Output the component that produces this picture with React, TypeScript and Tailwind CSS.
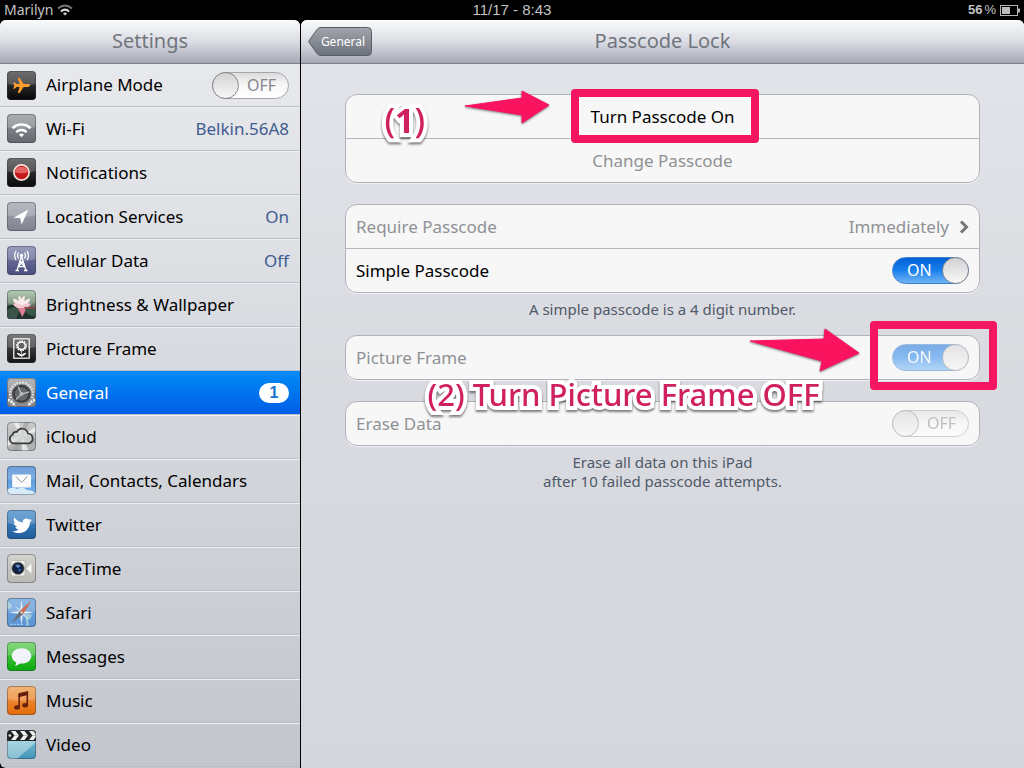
import React, { useId, useState } from "react";
import clsx from "clsx";

type IconProps = {
  from: string;
  to: string;
  gloss?: boolean;
  children: React.ReactNode;
};

const Tile: React.FC<IconProps> = ({ from, to, gloss = true, children }) => {
  const id = useId();

  return (
    <svg viewBox="0 0 29 29" className="h-[29px] w-[29px] shrink-0" aria-hidden="true">
      <defs>
        <linearGradient id={`${id}-bg`} x1="0" y1="0" x2="0" y2="1">
          <stop offset="0" stopColor={from} />
          <stop offset="1" stopColor={to} />
        </linearGradient>
        <clipPath id={`${id}-clip`}>
          <rect width="29" height="29" rx="4" />
        </clipPath>
      </defs>
      <g clipPath={`url(#${id}-clip)`}>
        <rect width="29" height="29" fill={`url(#${id}-bg)`} />
        {gloss && <path d="M0 0H29V13Q14.5 17 0 13Z" fill="#fff" opacity="0.2" />}
        {children}
      </g>
      <rect x="0.5" y="0.5" width="28" height="28" rx="3.5" fill="none" stroke="#30343c" strokeOpacity="0.4" />
    </svg>
  );
};

const AirplaneIcon = () => (
  <Tile from="#4a4a4c" to="#050505">
    <path
      d="M23 14.5C23 13.6 21.7 13.1 20.3 13.1H16.6L12.6 7H10.8L12.6 13.1H9.4L7.7 11.2H6.3L7.3 14.5L6.3 17.8H7.7L9.4 15.9H12.6L10.8 22H12.6L16.6 15.9H20.3C21.7 15.9 23 15.4 23 14.5Z"
      fill="#ff9d2c"
    />
  </Tile>
);

const WifiIcon = () => (
  <Tile from="#969aa0" to="#63686f">
    <g fill="none" stroke="#fff" strokeWidth="2.6">
      <path d="M5.5 14.3C10.6 9.3 18.4 9.3 23.5 14.3" />
      <path d="M9.3 18.1C12.2 15.3 16.8 15.3 19.7 18.1" />
    </g>
    <path d="M11.9 20.6Q14.5 18.6 17.1 20.6L14.5 23.2Z" fill="#fff" />
  </Tile>
);

const NotificationsIcon = () => (
  <Tile from="#4b4b4d" to="#080808">
    <circle cx="14.5" cy="14.5" r="7.6" fill="#c5161c" stroke="#f4dfd5" strokeWidth="1.7" />
    <path d="M8 14.3A6.6 6.6 0 0 1 21 14.3Q14.5 16 8 14.3Z" fill="#e46461" />
  </Tile>
);

const LocationIcon = () => (
  <Tile from="#a6a9b3" to="#7f838f">
    <path d="M21.5 7.5L6.5 15.7L13.2 16.1L14.6 22.5Z" fill="#fff" />
  </Tile>
);

const CellularIcon = () => (
  <Tile from="#8084aa" to="#494b7d">
    <g fill="none" stroke="#fff" strokeWidth="1.3">
      <path d="M14.5 10L10 24.5M14.5 10L19 24.5M12.8 15.5L17.8 20.5M16.2 15.5L11.2 20.5M12.4 16H16.6M11 20.7H18" />
      <path d="M11.5 6.5Q9.7 9.5 11.5 12.5M9 5Q6.3 9.5 9 14M17.5 6.5Q19.3 9.5 17.5 12.5M20 5Q22.7 9.5 20 14" />
    </g>
    <circle cx="14.5" cy="9.5" r="1.7" fill="#fff" />
    <path d="M8.5 24.5H12M17 24.5H20.5" stroke="#fff" strokeWidth="1.3" />
  </Tile>
);

const WallpaperIcon = () => (
  <Tile from="#a2bf9f" to="#26382f">
    <path d="M0 16Q8 13 14 17T29 16V29H0Z" fill="#20332d" />
    <path d="M0 20Q7 15 13 20L9 29H0ZM17 20Q24 15 29 19V26Q22 27 17 20Z" fill="#3c5549" />
    <path d="M14.5 16Q5.5 14 6 8.5Q10 9 12 11Q10.5 8 12 5.5Q14 7 14.5 9Q15 7 17.5 5.5Q18.5 8 17.2 11Q19.5 9 23 8.5Q23.5 14 14.5 16Z" fill="#faeaec" />
    <path d="M6 14Q11 12 15 16Q19 12 24 14Q22 18.5 15 18.5Q8 18.5 6 14Z" fill="#f3c8d0" />
    <path d="M10.5 18H19L17.5 23L15 27L13 22Z" fill="#e07f92" />
    <path d="M17 17L29 16.5V18.5L18 19Z" fill="#8c4a4c" />
  </Tile>
);

const PictureFrameIcon = () => (
  <Tile from="#59595b" to="#141416">
    <rect x="6.8" y="4.8" width="15.4" height="19.4" fill="none" stroke="#fff" strokeWidth="1.2" />
    <circle cx="14.5" cy="11.8" r="4.7" fill="none" stroke="#fff" strokeWidth="1.6" strokeDasharray="1.5 0.9" />
    <circle cx="14.5" cy="11.8" r="3.7" fill="none" stroke="#fff" strokeWidth="1.3" />
    <path d="M14.5 16.5V23M14.5 22Q11 21.5 10 19.2Q13.5 19.2 14.5 22Q15.5 19.2 19 19.2Q18 21.5 14.5 22" fill="#fff" stroke="#fff" strokeWidth="0.7" />
  </Tile>
);

const GeneralIcon = () => (
  <Tile from="#a0a2a6" to="#77797d">
    <circle cx="14.5" cy="16" r="11.2" fill="none" stroke="#ececec" strokeWidth="2.6" strokeDasharray="1.5 1.3" />
    <circle cx="14.5" cy="16" r="10" fill="#484a4d" stroke="#a9abad" strokeWidth="0.8" />
    <circle cx="14.5" cy="16" r="7.3" fill="#65676a" stroke="#303235" />
    <path d="M14.5 16L11 8.5M14.5 16L22 14M14.5 16L9 21.5" stroke="#b5b7b9" strokeWidth="1.4" />
    <circle cx="14.5" cy="16" r="1.9" fill="#b9babc" />
    <path d="M0 20Q5 20 8 23Q14.5 27 21 23Q24 20 29 20V29H0Z" fill="#8a8c8f" />
    <path d="M1 22Q5 23 8 28M28 22Q24 23 21 28" fill="none" stroke="#fff" strokeWidth="2.6" strokeDasharray="2 1" />
  </Tile>
);

const ICloudIcon = () => (
  <Tile from="#c9cacb" to="#acaeb0" gloss={false}>
    <path d="M14.5 14.5L6 0H12ZM14.5 14.5L29 4V10ZM14.5 14.5L22 29H15ZM14.5 14.5L0 25V19Z" fill="#f2f2f2" opacity="0.8" />
    <path d="M14.5 14.5L17 0H23ZM14.5 14.5L29 17V23ZM14.5 14.5L5 29H11Z" fill="#949698" opacity="0.5" />
    <path
      d="M6.6 21.4A4.5 4.5 0 0 1 5.6 12.8A3.8 3.8 0 0 1 9.8 10A5.9 5.9 0 0 1 20.9 11.5A5.1 5.1 0 0 1 22.2 21.4Z"
      fill="#dcdddd"
      fillOpacity="0.7"
      stroke="#3a3c3f"
      strokeWidth="1.7"
    />
  </Tile>
);

const MailIcon = () => (
  <Tile from="#4c86cf" to="#74b4ec">
    <path d="M0 24Q5 20 10 23Q16 20 20 24Q25 24 29 27V29H0Z" fill="#e2f2fa" opacity="0.9" />
    <rect x="5.2" y="8.5" width="18.8" height="13" rx="1" fill="#fbfbfb" />
    <path d="M9 10.5L13.6 15.6Q14.6 16.6 15.6 15.6L20.2 10.5" fill="none" stroke="#8c939c" />
    <path d="M6 21L11.8 14.6M23.2 21L17.4 14.6" stroke="#e0e3e6" strokeWidth="0.7" />
  </Tile>
);

const TwitterIcon = () => (
  <Tile from="#4c91cd" to="#1f5d9c">
    <path
      d="M24.8 10.1C24.1 10.4 23.6 10.5 23 10.6C23.7 10.2 24.1 9.6 24.3 8.8C23.7 9.2 22.8 9.5 22.1 9.6C19.5 7.1 15.3 8.8 15.8 12.4C12.6 12.3 9.6 10.7 7.3 7.6C6 9.8 7 12 8.5 13.1C8 13.1 7.3 12.9 6.8 12.6C6.9 14.7 8.2 16.2 10 16.8C9.4 17 8.7 17 8.3 16.9C8.8 18.4 10.1 19.4 11.8 19.5C10 20.9 7.6 21.4 5.2 21.2C12.8 25.9 22.9 21.6 22.9 12.3C23.7 11.7 24.3 11 24.8 10.1Z"
      fill="#fff"
    />
  </Tile>
);

const FaceTimeIcon = () => (
  <Tile from="#d4d3ce" to="#bab9b4" gloss={false}>
    <rect x="4" y="6.5" width="14" height="15.5" rx="2" fill="#f1f1ee" stroke="#a7a7a3" strokeWidth="0.6" />
    <path d="M19 14.4L24.9 8.5V20.5Z" fill="#fafaf7" stroke="#aaaaa5" strokeWidth="0.5" />
    <circle cx="11" cy="14.3" r="6.4" fill="#23262b" stroke="#aeb1b5" strokeWidth="0.8" />
    <circle cx="11" cy="14.3" r="4.4" fill="#0d2147" />
    <path d="M8.2 11.8Q11 9.2 13.6 12L11 14.3Z" fill="#5c86c4" />
    <circle cx="12.8" cy="16" r="1.6" fill="#2e5a9e" />
  </Tile>
);

const SafariIcon = () => (
  <Tile from="#6ea6df" to="#5c94d4">
    <path d="M17 17Q22 14 25 17Q24 21 21 22L22 27L19 28Q20 22 17 17ZM0 4Q4 4 5 8L3 11L0 10Z" fill="#c8e6d9" opacity="0.6" />
    <path d="M14.5 2L16 13L27 14.5L16 16L14.5 27L13 16L2 14.5L13 13Z" fill="#fff" opacity="0.8" />
    <path d="M7 7L14 12.8L22 22L15 16.2Z" fill="#e5f1fb" opacity="0.9" />
    <path d="M24.6 2.5L16.2 16.2L12.8 12.8Z" fill="#cf6d50" />
    <path d="M4.5 25L16.2 16.2L12.8 12.8Z" fill="#6b7079" />
    <circle cx="14.5" cy="14.5" r="1.1" fill="#e9eef5" />
    <path d="M3 26.3H16" stroke="#fff" strokeWidth="0.9" strokeDasharray="2 1.5" opacity="0.7" />
  </Tile>
);

const MessagesIcon = () => (
  <Tile from="#68cf5b" to="#08a90b">
    <path
      d="M14.5 6.2C9 6.2 4.8 9.6 4.8 13.9C4.8 16.7 6.6 19 9.2 20.4C9.2 21.8 8.6 22.9 7.7 23.8C9.9 23.6 11.6 22.7 12.8 21.5C19 22.2 24.3 18.8 24.3 13.9C24.3 9.6 20 6.2 14.5 6.2Z"
      fill="#f2f4fb"
    />
  </Tile>
);

const MusicIcon = () => (
  <Tile from="#f0a354" to="#e56a08">
    <path d="M12.2 8V21M20.3 6V18.6" stroke="#66200c" strokeWidth="1.6" />
    <path d="M11.4 7.2L21.1 4.9V8.9L11.4 11.2Z" fill="#66200c" />
    <ellipse cx="10.1" cy="21.4" rx="2.9" ry="2.2" fill="#66200c" />
    <ellipse cx="18.2" cy="19.3" rx="2.9" ry="2.2" fill="#66200c" />
  </Tile>
);

const VideoIcon = () => (
  <Tile from="#9ad2e2" to="#3e94b7" gloss={false}>
    <path d="M29 12L10 29H0V11H29Z" fill="#dff2f6" opacity="0.45" />
    <rect width="29" height="11" fill="#222426" />
    <path d="M4 1H8.5L12 5.5H7.5ZM13 1H17.5L21 5.5H16.5ZM22 1H26.5L30 5.5H25.5Z" fill="#f2f2f0" />
    <path d="M7.5 5.5H12L8.5 10H4ZM16.5 5.5H21L17.5 10H13ZM25.5 5.5H30L26.5 10H22Z" fill="#f2f2f0" />
    <circle cx="2.8" cy="5.5" r="1.3" fill="#ddd" />
  </Tile>
);

type SwitchProps = {
  label: string;
  initial: boolean;
  disabled?: boolean;
};

const Switch: React.FC<SwitchProps> = ({ label, initial, disabled }) => {
  const [on, setOn] = useState(initial);

  return (
    <label className={clsx("relative block h-[27px] w-[77px] shrink-0", disabled && "opacity-50")}>
      <input
        type="checkbox"
        role="switch"
        aria-label={label}
        checked={on}
        disabled={disabled}
        onChange={() => setOn(!on)}
        className={clsx(
          "block h-full w-full appearance-none rounded-full border",
          on
            ? "border-[#3a80c8] bg-linear-to-b from-[#0460d6] via-[#1680ec] to-[#6db4f6]"
            : "border-[#a3a5a9] bg-linear-to-b from-[#dcdcde] via-[#f8f8f8] to-white"
        )}
      />
      <span
        className={clsx(
          "pointer-events-none absolute top-0 h-[27px] w-[27px] rounded-full border border-[#85878c] bg-linear-to-b from-[#d2d2d4] to-[#f8f8f8]",
          on ? "right-0" : "left-0"
        )}
      />
      <span
        className={clsx(
          "pointer-events-none absolute top-0 text-base leading-[27px]",
          on ? "left-[15px] text-white" : "right-[13px] text-[#85878b]"
        )}
      >
        {on ? "ON" : "OFF"}
      </span>
    </label>
  );
};

type Item = {
  name: string;
  icon: React.FC;
  value?: string;
  badge?: number;
};

const items: Item[] = [
  { name: "Wi-Fi", icon: WifiIcon, value: "Belkin.56A8" },
  { name: "Notifications", icon: NotificationsIcon },
  { name: "Location Services", icon: LocationIcon, value: "On" },
  { name: "Cellular Data", icon: CellularIcon, value: "Off" },
  { name: "Brightness & Wallpaper", icon: WallpaperIcon },
  { name: "Picture Frame", icon: PictureFrameIcon },
  { name: "General", icon: GeneralIcon, badge: 1 },
  { name: "iCloud", icon: ICloudIcon },
  { name: "Mail, Contacts, Calendars", icon: MailIcon },
  { name: "Twitter", icon: TwitterIcon },
  { name: "FaceTime", icon: FaceTimeIcon },
  { name: "Safari", icon: SafariIcon },
  { name: "Messages", icon: MessagesIcon },
  { name: "Music", icon: MusicIcon },
  { name: "Video", icon: VideoIcon },
];

const rowClass =
  "flex w-full items-center gap-[10px] border-b border-[#b9bfc6] pr-[11px] pl-[7px] text-left text-[17px] whitespace-nowrap";

const headerClass =
  "flex h-11 items-center border-b border-[#7c808d] bg-linear-to-b from-[#fafbfc] via-[#dcdde4] to-[#a5a8b6]";

const Sidebar = () => {
  const [selected, setSelected] = useState("General");

  return (
    <aside className="w-[300px] shrink-0 overflow-hidden rounded-t-md rounded-bl-md bg-linear-to-b from-[#e9ebee] to-[#c3c6cd]">
      <header className={clsx(headerClass, "justify-center")}>
        <h1 className="pb-0.5 text-xl text-[#70757e]">Settings</h1>
      </header>
      <nav>
        <ul>
          <li className={clsx(rowClass, "h-[43px]")}>
            <AirplaneIcon />
            <span className="flex-1">Airplane Mode</span>
            <Switch label="Airplane Mode" initial={false} />
          </li>
          {items.map(({ name, icon: Icon, value, badge }) => {
            const active = name === selected;

            return (
              <li key={name}>
                <button
                  type="button"
                  onClick={() => setSelected(name)}
                  className={clsx(
                    rowClass,
                    "h-11",
                    active
                      ? "border-[#0a4bb5] bg-linear-to-b from-[#078bf6] to-[#015de6] text-white"
                      : "shadow-[inset_0_1px_0_#eef0f3]"
                  )}
                >
                  <Icon />
                  <span className="flex-1">{name}</span>
                  {value && <span className="text-[#3f5b92]">{value}</span>}
                  {badge && (
                    <span className="w-[30px] rounded-full bg-white text-center font-['Liberation_Sans',sans-serif] text-base leading-5 font-bold text-[#1874d2]">
                      {badge}
                    </span>
                  )}
                </button>
              </li>
            );
          })}
        </ul>
      </nav>
    </aside>
  );
};

const Group: React.FC<{ children: React.ReactNode; className?: string }> = ({ children, className }) => (
  <div
    className={clsx(
      "divide-y divide-[#b5b8bd] rounded-xl border border-[#b0b3ba] bg-[#f7f7f8] text-[17px] shadow-[0_1px_0_#eff0f3]",
      className
    )}
  >
    {children}
  </div>
);

const Arrow: React.FC<{ points: string; className: string; viewBox: string }> = ({ points, className, viewBox }) => (
  <svg viewBox={viewBox} className={clsx("pointer-events-none absolute drop-shadow-[0_1px_1px_#00000080]", className)} aria-hidden="true">
    <polygon points={points} fill="#fa1460" stroke="#fa1460" strokeLinejoin="round" />
  </svg>
);

const calloutText =
  "pointer-events-none absolute z-10 font-medium whitespace-nowrap text-[#cf2160] [-webkit-text-stroke:8px_white] [paint-order:stroke_fill] drop-shadow-[0_2px_1px_#00000080]";

const PasscodeLock = () => (
  <main className="min-w-0 flex-1 overflow-hidden rounded-t-md bg-linear-to-b from-[#e3e5ea] via-[#d9dadf] to-[#d4d7de]">
    <header className={clsx(headerClass, "relative justify-center")}>
      <button type="button" className="absolute top-[7px] left-[7px] h-[29px] w-16 pl-1.5 text-xs text-white">
        <svg viewBox="0 0 64 29" className="absolute inset-0 h-full w-full" aria-hidden="true">
          <defs>
            <linearGradient id="back" x1="0" y1="0" x2="0" y2="1">
              <stop offset="0" stopColor="#a2a5ac" />
              <stop offset="1" stopColor="#6b717b" />
            </linearGradient>
          </defs>
          <path
            d="M0.5 14.5L9 2.5Q10.5 0.5 13 0.5H59.5Q63.5 0.5 63.5 4.5V24.5Q63.5 28.5 59.5 28.5H13Q10.5 28.5 9 26.5Z"
            fill="url(#back)"
            stroke="#585d66"
          />
        </svg>
        <span className="relative">General</span>
      </button>
      <h2 className="pb-0.5 text-xl text-[#70757e]">Passcode Lock</h2>
    </header>

    <div className="px-11 pt-[30px]">
      <Group>
        <div className="relative h-11">
          <button type="button" className="h-full w-full text-black">
            Turn Passcode On
          </button>
          <div className="pointer-events-none absolute -top-1.5 left-1/2 -ml-[92px] h-[54px] w-[188px] rounded-[4px] border-8 border-[#f51561]" />
          <Arrow
            viewBox="0 0 88 36"
            points="2,17 59,9 59,2 86,16 59,34 59,26"
            className="-top-[6px] left-1/2 -ml-[200px] h-9 w-[88px]"
          />
          <span className={clsx(calloutText, "top-0 left-1/2 -ml-[278px] text-[34px] leading-[50px]")}>
            (<span className="font-bold">1</span>)
          </span>
        </div>
        <button type="button" disabled className="block h-[43px] w-full text-[#8f9194]">
          Change Passcode
        </button>
      </Group>

      <Group className="mt-[21px]">
        <button type="button" disabled className="flex h-11 w-full items-center px-2.5 text-[#8f9194]">
          <span className="flex-1 text-left">Require Passcode</span>
          <span>Immediately</span>
          <svg viewBox="0 0 10 14" className="ml-2.5 h-3.5 w-2.5" aria-hidden="true">
            <path d="M2 1.5L7.5 7L2 12.5" fill="none" stroke="#747678" strokeWidth="3" />
          </svg>
        </button>
        <div className="flex h-[43px] items-center justify-between px-2.5 text-black">
          <span>Simple Passcode</span>
          <Switch label="Simple Passcode" initial />
        </div>
      </Group>
      <p className="pt-[7px] text-center text-[15px] leading-[19px] text-[#4f5969]">A simple passcode is a 4 digit number.</p>

      <Group className="mt-4">
        <div className="relative flex h-[43px] items-center justify-between px-2.5 text-[#8f9194]">
          <span>Picture Frame</span>
          <Switch label="Picture Frame" initial disabled />
          <div className="pointer-events-none absolute -top-[15px] -right-[18px] h-[69px] w-[127px] rounded-[4px] border-8 border-[#f51561]" />
          <Arrow
            viewBox="0 0 114 46"
            points="2,14 76,12 77,2 111,26 72,44 74,34"
            className="-top-[9px] right-[117px] h-[46px] w-[114px]"
          />
          <span className={clsx(calloutText, "top-[38px] left-1/2 -ml-[235px] text-[31px] leading-10")}>
            (2) Turn Picture Frame OFF
          </span>
        </div>
      </Group>

      <Group className="mt-[21px]">
        <div className="flex h-[43px] items-center justify-between px-2.5 text-[#8f9194]">
          <span>Erase Data</span>
          <Switch label="Erase Data" initial={false} disabled />
        </div>
      </Group>
      <p className="pt-[7px] text-center text-[15px] leading-[19px] text-[#4f5969]">
        Erase all data on this iPad
        <br />
        after 10 failed passcode attempts.
      </p>
    </div>
  </main>
);

const StatusBar = () => (
  <div className="grid h-5 grid-cols-3 items-center px-1 text-sm leading-5 text-[#c3c3c3]">
    <div className="flex items-center gap-1">
      <span>Marilyn</span>
      <svg viewBox="0 0 16 12" className="h-3 w-4" aria-hidden="true">
        <path d="M1 4.5Q8 -1.5 15 4.5" fill="none" stroke="#777" strokeWidth="2" />
        <path d="M3.8 7.4Q8 3.8 12.2 7.4" fill="none" stroke="#d5d5d5" strokeWidth="2" />
        <path d="M6 9.4Q8 7.8 10 9.4L8 11.6Z" fill="#d5d5d5" />
      </svg>
    </div>
    <span className="text-center font-['Liberation_Sans',sans-serif] text-[15px]">11/17 - 8:43</span>
    <div className="flex items-center justify-end font-['Liberation_Sans',sans-serif] text-[13px]">
      <span className="font-bold">56</span>
      <span className="ml-0.5">%</span>
      <svg viewBox="0 0 20 11" className="ml-1 h-[11px] w-5" aria-hidden="true">
        <rect x="0.5" y="0.5" width="17" height="10" fill="none" stroke="#b5b5b5" />
        <rect x="2" y="2" width="8" height="7" fill="#bdbdbd" />
        <path d="M19 3.5V7.5" stroke="#b5b5b5" strokeWidth="2" />
      </svg>
    </div>
  </div>
);

const App: React.FC = () => (
  <div className="flex min-h-screen flex-col bg-black font-['Noto_Sans',sans-serif]">
    <StatusBar />
    <div className="flex flex-1 gap-px">
      <Sidebar />
      <PasscodeLock />
    </div>
  </div>
);

export default App;
